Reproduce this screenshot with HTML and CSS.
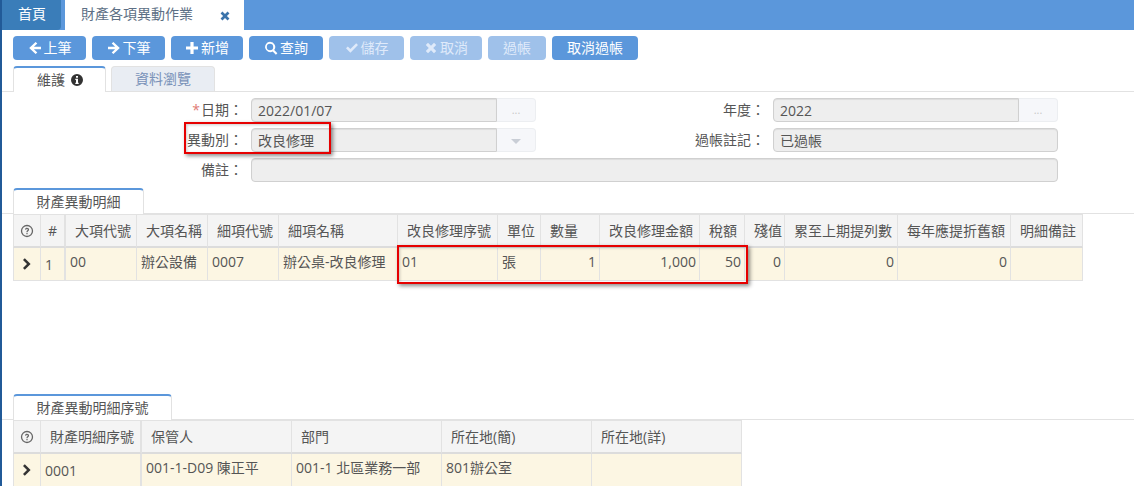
FILE: index.html
```html
<!DOCTYPE html>
<html lang="zh-Hant">
<head>
<meta charset="utf-8">
<title>財產各項異動作業</title>
<link rel="stylesheet" href="styles.css">
</head>
<body>
<svg class="defs" width="0" height="0" aria-hidden="true">
  <symbol id="i-left" viewBox="0 0 14 14"><path d="M7.600 1 1.200 7l6.400 6 1.700-1.600-3.400-3.200H13V5.800H5.900l3.400-3.200z"/></symbol>
  <symbol id="i-right" viewBox="0 0 14 14"><path d="M6.400 1 12.800 7l-6.400 6-1.700-1.600 3.400-3.200H1V5.800h7.100L4.700 2.600z"/></symbol>
  <symbol id="i-plus" viewBox="0 0 14 14"><path d="M5.400 1h3.200v4.400H13v3.200H8.600V13H5.400V8.600H1V5.400h4.400z"/></symbol>
  <symbol id="i-search" viewBox="0 0 14 14"><path fill-rule="evenodd" d="M6 .8a5.200 5.200 0 0 1 4.200 8.300l3.200 3.200-1.500 1.500-3.200-3.200A5.200 5.200 0 1 1 6 .8zm0 2a3.200 3.200 0 1 0 0 6.400 3.200 3.200 0 0 0 0-6.400z"/></symbol>
  <symbol id="i-check" viewBox="0 0 14 14"><path d="m1 7.300 1.800-1.800 2.600 2.600 5.800-5.800L13 4.100l-7.600 7.600z"/></symbol>
  <symbol id="i-times" viewBox="0 0 14 14"><path d="m4 1.800 3 3 3-3L12.200 4l-3 3 3 3-2.200 2.200-3-3-3 3L1.800 10l3-3-3-3z"/></symbol>
  <symbol id="i-chevron" viewBox="0 0 10 14"><path d="M2.800 1.200 8.600 7l-5.800 5.800-1.800-1.800L5 7 1 3z"/></symbol>
  <symbol id="i-info" viewBox="0 0 14 14"><path fill-rule="evenodd" d="M7 1a6 6 0 1 1 0 12A6 6 0 0 1 7 1zM6 2.900v1.800h2V2.900zM5.300 5.800v1.200H6v2.700h-.7v1.300h3.400V9.700H8V5.800z"/></symbol>
  <symbol id="i-help" viewBox="0 0 14 14"><circle cx="7" cy="7" r="5.500" fill="none" stroke="currentColor" stroke-width="1.300"/><path d="M5 5.600C5 4.400 5.900 3.800 7 3.800s2.100.7 2.100 1.800c0 1.500-1.500 1.500-1.500 2.700H6.400c0-1.900 1.400-1.800 1.400-2.700 0-.4-.3-.7-.8-.7-.6 0-.9.300-.9.800zM6.400 9h1.200v1.200H6.400z"/></symbol>
</svg>
<div class="page">
  <nav class="topbar">
    <a class="top-home">首頁</a>
    <a class="top-tab"><span>財產各項異動作業</span><svg class="top-close"><use href="#i-times"/></svg></a>
  </nav>

  <div class="toolbar">
    <button class="btn w73"><svg class="ico"><use href="#i-left"/></svg>上筆</button>
    <button class="btn w73"><svg class="ico"><use href="#i-right"/></svg>下筆</button>
    <button class="btn w72"><svg class="ico"><use href="#i-plus"/></svg>新增</button>
    <button class="btn w74"><svg class="ico"><use href="#i-search"/></svg>查詢</button>
    <button class="btn w75 off"><svg class="ico"><use href="#i-check"/></svg>儲存</button>
    <button class="btn w72 off"><svg class="ico"><use href="#i-times"/></svg>取消</button>
    <button class="btn w58 off">過帳</button>
    <button class="btn w86">取消過帳</button>
  </div>

  <div class="tabs main-tabs">
    <div class="tab active w93 tab-info">維護<svg class="info"><use href="#i-info"/></svg></div>
    <div class="tab idle w104">資料瀏覽</div>
  </div>

  <form class="form">
    <label class="lbl"><em>*</em>日期：</label>
    <div class="group"><div class="input">2022/01/07</div><div class="addon dots">...</div></div>
    <label class="lbl">年度：</label>
    <div class="group"><div class="input">2022</div><div class="addon dots">...</div></div>

    <label class="lbl">異動別：</label>
    <div class="group"><div class="input">改良修理</div><div class="addon"><i class="caret"></i></div></div>
    <label class="lbl">過帳註記：</label>
    <div class="input">已過帳</div>

    <label class="lbl">備註：</label>
    <div class="input wide"></div>
  </form>

  <div class="tabs section-tabs first">
    <div class="tab active w131">財產異動明細</div>
  </div>
  <div class="grid grid-a">
    <div class="th"><svg class="help"><use href="#i-help"/></svg></div>
    <div class="th center sep">#</div>
    <div class="th">大項代號</div>
    <div class="th">大項名稱</div>
    <div class="th">細項代號</div>
    <div class="th">細項名稱</div>
    <div class="th">改良修理序號</div>
    <div class="th">單位</div>
    <div class="th">數量</div>
    <div class="th">改良修理金額</div>
    <div class="th">稅額</div>
    <div class="th">殘值</div>
    <div class="th">累至上期提列數</div>
    <div class="th">每年應提折舊額</div>
    <div class="th">明細備註</div>

    <div class="td mark"><svg class="chev"><use href="#i-chevron"/></svg></div>
    <div class="td low sep">1</div>
    <div class="td">00</div>
    <div class="td">辦公設備</div>
    <div class="td">0007</div>
    <div class="td">辦公桌-改良修理</div>
    <div class="td">01</div>
    <div class="td">張</div>
    <div class="td num">1</div>
    <div class="td num">1,000</div>
    <div class="td num">50</div>
    <div class="td num">0</div>
    <div class="td num">0</div>
    <div class="td num">0</div>
    <div class="td"></div>
  </div>

  <div class="tabs section-tabs second">
    <div class="tab active w159">財產異動明細序號</div>
  </div>
  <div class="grid grid-b">
    <div class="th"><svg class="help"><use href="#i-help"/></svg></div>
    <div class="th sep">財產明細序號</div>
    <div class="th">保管人</div>
    <div class="th">部門</div>
    <div class="th">所在地(簡)</div>
    <div class="th">所在地(詳)</div>

    <div class="td mark"><svg class="chev"><use href="#i-chevron"/></svg></div>
    <div class="td low sep">0001</div>
    <div class="td">001-1-D09 陳正平</div>
    <div class="td">001-1 北區業務一部</div>
    <div class="td">801辦公室</div>
    <div class="td"></div>
  </div>

  <div class="callout callout-type"></div>
  <div class="callout callout-row"></div>
</div>
</body>
</html>
```
FILE: styles.css
```css
* { box-sizing: border-box; }
html, body { margin: 0; height: 100%; }
body {
  overflow: hidden;
  background: #fff;
  color: #555;
  font: 14px/20px "Open Sans", "Noto Sans CJK TC", sans-serif;
}
.defs { position: absolute; }
.page {
  position: relative;
  height: 486px;
  overflow: hidden;
  border-left: 2px solid #215a98;
}

/* top bar */
.topbar {
  display: flex;
  height: 30px;
  background: #5b97db;
}
.top-home {
  width: 59px;
  padding: 4px 0 0 16px;
  background: #3a7db9;
  border-radius: 0 0 4px 0;
  color: #fff;
}
.top-tab {
  display: flex;
  width: 179px;
  margin-left: 4px;
  padding: 4px 0 0 16px;
  background: #fff;
  color: #5d6f85;
}
.top-close {
  width: 12px;
  height: 12px;
  margin: 6px 0 0 26px;
  fill: #3c74ab;
}

/* toolbar */
.toolbar {
  display: flex;
  gap: 6px;
  padding: 6px 0 0 11px;
}
.btn {
  display: flex;
  align-items: center;
  justify-content: center;
  height: 24px;
  padding: 0;
  border: 0;
  border-radius: 4px;
  background: #5b97db;
  color: #fff;
  font: inherit;
}
.btn.off { background: #9fc1ea; color: #dfeafa; }
.ico { width: 14px; height: 14px; margin-right: 2px; fill: currentColor; }
.w58 { width: 58px; }
.w72 { width: 72px; }
.w73 { width: 73px; }
.w74 { width: 74px; }
.w75 { width: 75px; }
.w86 { width: 86px; }
.w93 { width: 93px; }
.w104 { width: 104px; }
.w131 { width: 131px; }
.w159 { width: 159px; }

/* tabs */
.tabs {
  display: flex;
  gap: 5px;
  padding-left: 11px;
  border-bottom: 1px solid #e2e2e2;
}
.main-tabs { height: 26px; margin-top: 6px; }
.section-tabs { height: 26px; }
.section-tabs.first { margin-top: 6px; }
.section-tabs.second { margin-top: 113px; }
.tab {
  display: flex;
  align-items: center;
  justify-content: center;
  height: 26px;
  border: 1px solid #e2e2e2;
  border-bottom: 0;
  border-radius: 4px 4px 0 0;
  font-size: 14px;
}
.tab.active {
  border-top: 2px solid #5b97db;
  background: #fff;
  color: #555;
}
.tab.idle {
  height: 25px;
  background: #e9edf3;
  color: #7891b8;
}
.tab-info { padding-left: 2px; }
.info { width: 14px; height: 14px; margin-left: 5px; fill: #333; }

/* form */
.form {
  display: grid;
  grid-template-columns: 241px 285px 221px 285px;
  column-gap: 8px;
  row-gap: 6px;
  padding-top: 6px;
}
.lbl {
  padding-top: 2px;
  text-align: right;
  color: #555;
}
.lbl em { color: #e07a76; font-style: normal; margin-right: 1px; }
.group { display: flex; }
.input {
  flex: 1;
  height: 24px;
  padding: 2px 6px;
  border: 1px solid #d0d0d0;
  border-radius: 4px;
  background: #eee;
  box-shadow: inset 0 1px 1px rgba(0, 0, 0, .075);
  color: #555;
}
.group .input { border-radius: 4px 0 0 4px; }
.wide { grid-column: 2 / 5; }
.addon {
  display: flex;
  align-items: center;
  justify-content: center;
  width: 39px;
  height: 24px;
  border: 1px solid #eceef1;
  border-left: 0;
  border-radius: 0 4px 4px 0;
  background: #f6f7fa;
  color: #c8c8c8;
  font-size: 11px;
}
.caret {
  width: 0;
  height: 0;
  margin-top: 2px;
  border: 5px solid transparent;
  border-top: 5px solid #c9ced6;
  border-bottom: 0;
}

/* grids */
.grid {
  display: grid;
  width: max-content;
  margin-left: 11px;
}
.grid-a {
  grid-template-columns: 28px 25px 71px 71px 71px 119px 100px 43px 59px 100px 45px 40px 113px 113px 72px;
  grid-template-rows: 34px 33px;
}
.grid-b {
  grid-template-columns: 28px 101px 150px 150px 150px 150px;
  grid-template-rows: 34px 33px;
}
.th {
  display: flex;
  align-items: center;
  padding: 0 0 0 9px;
  border-top: 1px solid #e2e2e2;
  border-right: 1px solid #e2e2e2;
  border-bottom: 2px solid #dcdcdc;
  background: #f4f4f4;
  color: #555;
  white-space: nowrap;
}
.th.center { justify-content: center; padding: 0; }
.th:first-child, .td.mark { padding: 0; justify-content: center; border-left: 1px solid #e2e2e2; }
.td {
  padding: 4px 3px 0 4px;
  border-right: 1px solid #e2e2e2;
  border-bottom: 1px solid #e2e2e2;
  background: #fcf6e3;
  color: #555;
  white-space: nowrap;
}
.sep { border-right-width: 2px; }
.td.mark { display: flex; align-items: center; }
.td.low { padding-top: 7px; }
.td.num { text-align: right; }
.help { width: 14px; height: 14px; color: #666; fill: #666; }
.chev { width: 10px; height: 14px; fill: #333; }

/* red annotation boxes drawn over the screenshot */
.callout {
  position: absolute;
  border: 2px solid #e60000;
  box-shadow: 2px 2px 4px rgba(0, 0, 0, .45), inset 1px 1px 3px rgba(0, 0, 0, .2);
}
.callout-type { left: 182px; top: 122px; width: 147px; height: 32px; }
.callout-row { left: 395px; top: 245px; width: 351px; height: 39px; }
```
